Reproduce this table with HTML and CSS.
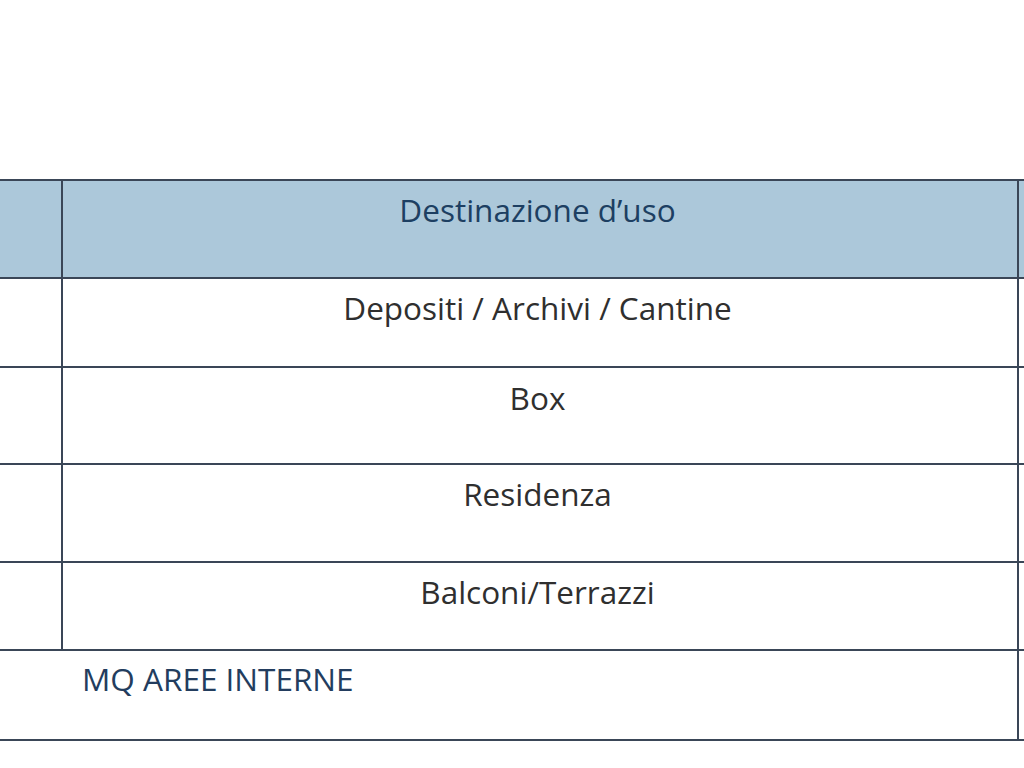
FILE: index.html
```html
<!DOCTYPE html>
<html lang="it">
<head>
<meta charset="utf-8">
<title>Destinazione d'uso</title>
<link rel="stylesheet" href="styles.css">
</head>
<body>
<div class="page">
  <table class="grid">
    <colgroup>
      <col class="c1">
      <col class="c2">
      <col class="c3">
    </colgroup>
    <thead>
      <tr class="r-head">
        <th></th>
        <th class="label">Destinazione d’uso</th>
        <th></th>
      </tr>
    </thead>
    <tbody>
      <tr class="r1"><td></td><td class="label">Depositi / Archivi / Cantine</td><td></td></tr>
      <tr class="r2"><td></td><td class="label">Box</td><td></td></tr>
      <tr class="r3"><td></td><td class="label">Residenza</td><td></td></tr>
      <tr class="r4"><td></td><td class="label">Balconi/Terrazzi</td><td></td></tr>
      <tr class="r5"><td colspan="2" class="total">MQ AREE INTERNE</td><td></td></tr>
    </tbody>
  </table>
</div>
</body>
</html>
```

FILE: styles.css
```css
html, body {
  margin: 0;
  padding: 0;
  background: #ffffff;
  overflow: hidden;
}

.page {
  width: 1024px;
  height: 768px;
  overflow: hidden;
  padding-top: 179px;
  box-sizing: border-box;
}

.grid {
  margin-left: -20px;
  width: 1137px;
  table-layout: fixed;
  border-collapse: collapse;
  font-family: "Open Sans", "Liberation Sans", sans-serif;
  font-size: 31.5px;
  line-height: 38px;
}

.c1 { width: 81px; }
.c2 { width: 956px; }
.c3 { width: 100px; }

.grid th,
.grid td {
  border: 2px solid #3a4657;
  padding: 0;
  vertical-align: top;
  text-align: center;
  font-weight: 400;
  color: #2f2f2f;
}

.grid thead th {
  background: #acc8da;
  color: #1d3f62;
  padding-top: 10px;
}

.r-head { height: 98px; }
.r1 { height: 89px; }
.r2 { height: 97px; }
.r3 { height: 98px; }
.r4 { height: 88px; }
.r5 { height: 90px; }

.r1 td { padding-top: 10px; }
.r2 td { padding-top: 11px; }
.r3 td { padding-top: 10px; }
.r4 td { padding-top: 10px; }
.r5 td { padding-top: 9px; }

.grid .label {
  padding-right: 5px;
}

.grid td.total {
  text-align: left;
  padding-left: 100px;
  color: #233d5e;
}
```
